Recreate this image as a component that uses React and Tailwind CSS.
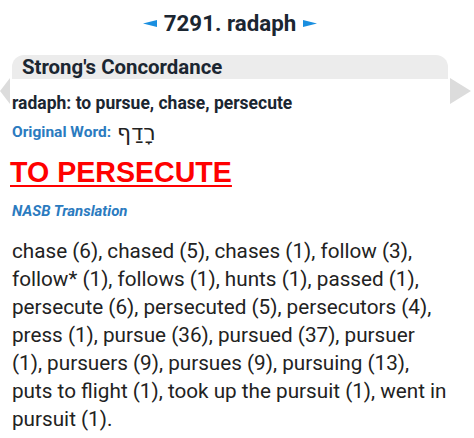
import React from "react";

export default function App() {
  return (
    <div className="w-[474px] h-[438px] bg-white relative overflow-hidden" style={{ fontFamily: "Roboto, 'Noto Sans', sans-serif" }}>
      <div className="flex items-center justify-center gap-[7px] h-[46px] pl-[12px] pr-[26px]">
        <svg width="14" height="7" viewBox="0 0 14 7"><polygon points="0,3.5 14,0 14,7" fill="#1a8fe0" /></svg>
        <span className="text-[22.3px] font-bold text-[#1b2631] leading-none">7291. radaph</span>
        <svg width="14" height="7" viewBox="0 0 14 7"><polygon points="14,3.5 0,0 0,7" fill="#1a8fe0" /></svg>
      </div>
      <div className="mt-[9px] ml-[12px] mr-[26px] h-[24px] bg-[#ececec] rounded-t-[12px] flex items-center px-[10px]">
        <span className="text-[20.4px] font-bold text-[#1b2631] leading-none">Strong's Concordance</span>
      </div>
      <svg className="absolute left-0 top-[78px]" width="10" height="26" viewBox="0 0 10 26"><polygon points="0,13 10,0 10,26" fill="#dcdcdc" /></svg>
      <svg className="absolute left-[450px] top-[78px]" width="21" height="26" viewBox="0 0 21 26"><polygon points="0,0 21,13 0,26" fill="#dcdcdc" /></svg>
      <div className="px-[12px]">
        <div className="mt-[14px] text-[17.5px] font-bold text-[#1b2631] leading-[20px]">radaph: to pursue, chase, persecute</div>
        <div className="mt-[10px] flex items-center gap-[6px] h-[20px]">
          <span className="text-[15.5px] font-bold text-[#2b7bbf]">Original Word:</span>
          <span className="text-[22px] text-[#222] leading-none" style={{ fontFamily: "'DejaVu Sans', sans-serif" }}>רָדַף</span>
        </div>
        <div className="mt-[13px] -ml-[2px] text-[28.6px] font-bold text-[#ff0000] underline underline-offset-[3px] decoration-[2px] leading-[32px]" style={{ fontFamily: "'Liberation Sans', Arial, sans-serif" }}>TO PERSECUTE</div>
        <div className="mt-[14px] text-[15px] font-bold italic text-[#2b7bbf] leading-[18px]">NASB Translation</div>
        <p className="mt-[17px] text-[20.7px] text-[#222] leading-[28px] w-[436px]">
          chase (6), chased (5), chases (1), follow (3), follow* (1), follows (1), hunts (1), passed (1), persecute (6), persecuted (5), persecutors (4), press (1), pursue (36), pursued (37), pursuer (1), pursuers (9), pursues (9), pursuing (13), puts to flight (1), took up the pursuit (1), went in pursuit (1).
        </p>
      </div>
    </div>
  );
}
